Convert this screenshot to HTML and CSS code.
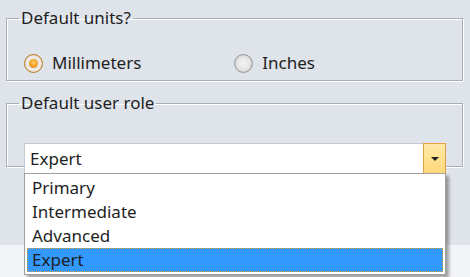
FILE: index.html
```html
<!DOCTYPE html>
<html lang="en">
<head>
    <meta charset="UTF-8">
    <title>Settings</title>
    <link rel="stylesheet" href="styles.css">
</head>
<body>
    <div class="window">
        <div class="panel">
            <fieldset class="group units">
                <legend>Default units?</legend>
                <div class="radio-row">
                    <label class="radio checked"><span class="dot"></span>Millimeters</label>
                    <label class="radio"><span class="dot"></span>Inches</label>
                </div>
            </fieldset>

            <fieldset class="group role">
                <legend>Default user role</legend>
                <div class="combo">
                    <span class="combo-value">Expert</span>
                    <span class="combo-button"><span class="arrow"></span></span>
                    <ul class="combo-list">
                        <li>Primary</li>
                        <li>Intermediate</li>
                        <li>Advanced</li>
                        <li class="selected">Expert</li>
                    </ul>
                </div>
            </fieldset>
        </div>
        <div class="footer"></div>
    </div>
</body>
</html>
```

FILE: styles.css
```css
body {
    margin: 0;
    font-family: "Noto Sans", "Open Sans", sans-serif;
    font-size: 16px;
    color: #1e1e1e;
    background-color: #f4f5f8;
}
.window {
    width: 470px;
    height: 277px;
    display: flex;
    flex-direction: column;
}
.panel {
    height: 245px;
    background-color: #dfe3ea;
    padding: 6px 7px 0 6px;
    box-sizing: border-box;
}
.footer {
    flex: 1;
    background-color: #f4f5f8;
}
.group {
    margin: 0;
    padding: 0;
    border: 1px solid #a9aeb5;
    box-shadow: inset 1px 1px 0 #ffffff, 1px 1px 0 #ffffff;
    min-width: 0;
}
.group legend {
    margin-left: 12px;
    padding: 0 2px;
    line-height: 24px;
    font-size: 17px;
}
.units {
    height: 75px;
    box-sizing: border-box;
}
.role {
    margin-top: 10px;
    height: 76px;
    box-sizing: border-box;
}
.radio-row {
    display: flex;
    padding: 21px 0 0 17px;
}
.radio {
    display: flex;
    align-items: center;
    gap: 9px;
    font-size: 17px;
    line-height: 24px;
}
.radio + .radio {
    margin-left: 93px;
}
.dot {
    width: 17px;
    height: 17px;
    border-radius: 50%;
    border: 1px solid #9a9a9a;
    background: radial-gradient(circle, #f4f4f4 0, #e4e4e4 55%, #cfcfcf 70%, #f2f2f2 100%);
    position: relative;
}
.checked .dot {
    border-color: #b07a30;
    background: radial-gradient(circle, #f4f4f4 0, #e8e8e8 60%, #f7d9a4 70%, #f2f2f2 100%);
}
.checked .dot::after {
    content: "";
    position: absolute;
    left: 4px;
    top: 4px;
    width: 9px;
    height: 9px;
    border-radius: 50%;
    background: radial-gradient(circle at 50% 40%, #ffcf6a 0, #f29a1a 60%, #d0700a 100%);
}
.combo {
    position: relative;
    margin: 28px 16px 0 17px;
    height: 31px;
    box-sizing: border-box;
    background-color: #ffffff;
    border: 1px solid #c6cad0;
    display: flex;
    align-items: center;
}
.combo-value {
    flex: 1;
    padding-left: 5px;
    font-size: 17px;
}
.combo-button {
    width: 23px;
    height: 31px;
    margin: -1px -1px -1px 0;
    box-sizing: border-box;
    border: 1px solid #e0a043;
    background: linear-gradient(#ffe9a8, #ffd97a);
    display: flex;
    align-items: center;
    justify-content: center;
}
.arrow {
    width: 0;
    height: 0;
    border-left: 4px solid transparent;
    border-right: 4px solid transparent;
    border-top: 4px solid #222222;
}
.combo-list {
    position: absolute;
    left: -1px;
    right: -1px;
    top: 29px;
    margin: 0;
    padding: 2px;
    list-style: none;
    background-color: #ffffff;
    border: 1px solid #a0a0a0;
    box-shadow: 3px 3px 3px rgba(0, 0, 0, 0.35);
}
.combo-list li {
    font-size: 17px;
    line-height: 22px;
    padding-left: 4px;
    border: 1px dotted transparent;
    height: 22px;
}
.combo-list .selected {
    background-color: #3399ff;
    border-color: #d9a04a;
}
```
